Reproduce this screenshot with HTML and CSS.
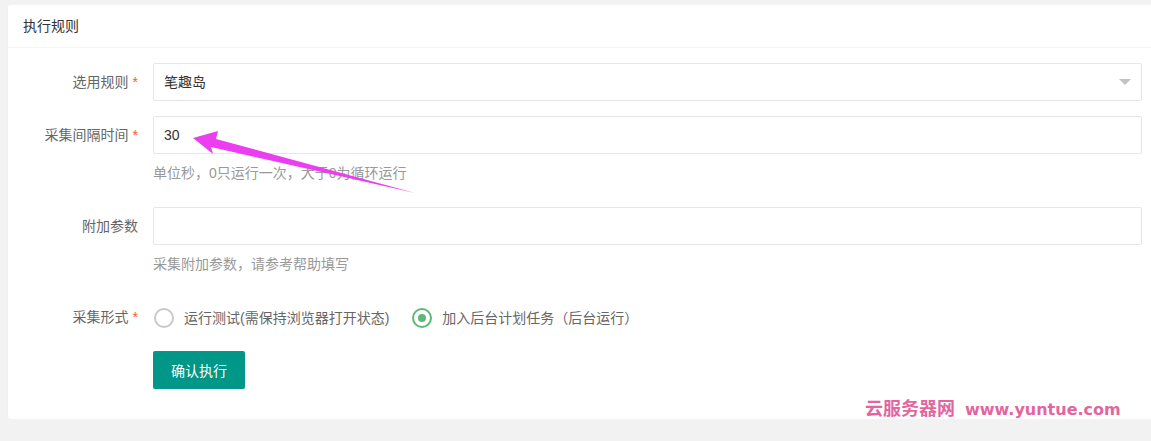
FILE: index.html
```html
<!DOCTYPE html>
<html lang="zh-CN">
<head>
  <meta charset="UTF-8">
  <meta name="viewport" content="width=device-width, initial-scale=1.0">
  <title>执行规则</title>
  <link rel="stylesheet" href="styles.css">
</head>
<body>
  <div class="page">
    <div class="card">
      <div class="card-header">执行规则</div>
      <div class="card-body">
        <div class="form-item">
          <label class="form-label">选用规则<span class="req">*</span></label>
          <div class="form-block">
            <div class="select">
              <span>笔趣岛</span>
              <i class="edge"></i>
            </div>
          </div>
        </div>

        <div class="form-item">
          <label class="form-label">采集间隔时间<span class="req">*</span></label>
          <div class="form-block">
            <input class="input" type="text" value="30">
            <div class="word-aux">单位秒，0只运行一次，大于0为循环运行</div>
          </div>
        </div>

        <div class="form-item">
          <label class="form-label">附加参数</label>
          <div class="form-block">
            <input class="input" type="text" value="">
            <div class="word-aux">采集附加参数，请参考帮助填写</div>
          </div>
        </div>

        <div class="form-item">
          <label class="form-label">采集形式<span class="req">*</span></label>
          <div class="form-block radios">
            <div class="radio"><i class="radio-icon"></i>运行测试(需保持浏览器打开状态)</div>
            <div class="radio checked"><i class="radio-icon"></i>加入后台计划任务（后台运行）</div>
          </div>
        </div>

        <div class="form-item">
          <div class="form-block offset">
            <button class="btn">确认执行</button>
          </div>
        </div>
      </div>
    </div>
  </div>

  <!-- annotation arrow -->
  <svg class="arrow" width="240" height="70" viewBox="190 128 240 70">
    <polygon points="193,138 218,131 216,139 415,193 211,147 213,154" fill="#ea3ef0"/>
  </svg>

  <div class="watermark"><span class="wm-cn">云服务器网</span><span class="wm-en">www.yuntue.com</span></div>
</body>
</html>
```

FILE: styles.css
```css
html, body {
  margin: 0;
  padding: 0;
  overflow: hidden;
  background-color: #f2f2f2;
  font-family: "Liberation Sans", "Noto Sans CJK SC", sans-serif;
  font-size: 14px;
  color: #333;
}

.page {
  padding: 5px 0 0 8px;
  width: 1160px;
}

.card {
  width: 1149px;
  background-color: #fff;
  border-radius: 2px;
  box-shadow: 0 1px 2px 0 rgba(0, 0, 0, 0.05);
}

.card-header {
  height: 42px;
  line-height: 42px;
  padding: 0 15px;
  border-bottom: 1px solid #f6f6f6;
  color: #333;
}

.card-body {
  padding: 15px;
}

.form-item {
  display: flex;
  margin-bottom: 15px;
}

.form-label {
  width: 100px;
  padding: 9px 15px;
  line-height: 20px;
  text-align: right;
  color: #666;
  white-space: nowrap;
}

.req {
  color: #ff5722;
  margin-left: 4px;
}

.form-block {
  flex: 1;
}

.form-block.offset {
  margin-left: 130px;
}

.select {
  position: relative;
  height: 38px;
  line-height: 36px;
  box-sizing: border-box;
  border: 1px solid #e6e6e6;
  border-radius: 2px;
  padding-left: 10px;
  color: #333;
}

.edge {
  position: absolute;
  right: 10px;
  top: 50%;
  margin-top: -3px;
  width: 0;
  height: 0;
  border: 6px solid transparent;
  border-top-color: #c2c2c2;
  border-bottom: none;
}

.input {
  display: block;
  width: 100%;
  height: 38px;
  box-sizing: border-box;
  border: 1px solid #e6e6e6;
  border-radius: 2px;
  padding-left: 10px;
  font-family: inherit;
  font-size: 14px;
  color: #333;
  outline: none;
}

.word-aux {
  padding: 9px 0;
  line-height: 20px;
  color: #999;
}

.radios {
  display: flex;
  align-items: center;
  height: 38px;
}

.radio {
  display: flex;
  align-items: center;
  margin-right: 22px;
  color: #666;
  line-height: 28px;
  margin-top: 1px;
}

.radio-icon {
  width: 16px;
  height: 16px;
  border: 2px solid #c9c9c9;
  border-radius: 50%;
  margin: 0 10px 0 1px;
  position: relative;
}

.radio.checked .radio-icon {
  border-color: #5fb878;
}

.radio.checked .radio-icon::after {
  content: "";
  position: absolute;
  left: 4px;
  top: 4px;
  width: 8px;
  height: 8px;
  border-radius: 50%;
  background-color: #5fb878;
}

.btn {
  height: 38px;
  padding: 0 18px;
  border: none;
  border-radius: 2px;
  background-color: #009688;
  color: #fff;
  font-family: inherit;
  font-size: 14px;
  cursor: pointer;
}

.arrow {
  position: absolute;
  left: 190px;
  top: 128px;
}

.watermark {
  position: absolute;
  left: 865px;
  top: 394px;
  color: #e3659f;
  font-weight: bold;
  white-space: nowrap;
}

.wm-cn {
  font-size: 18px;
  margin-right: 10px;
}

.wm-en {
  font-family: "DejaVu Sans", sans-serif;
  font-size: 16px;
}
```
